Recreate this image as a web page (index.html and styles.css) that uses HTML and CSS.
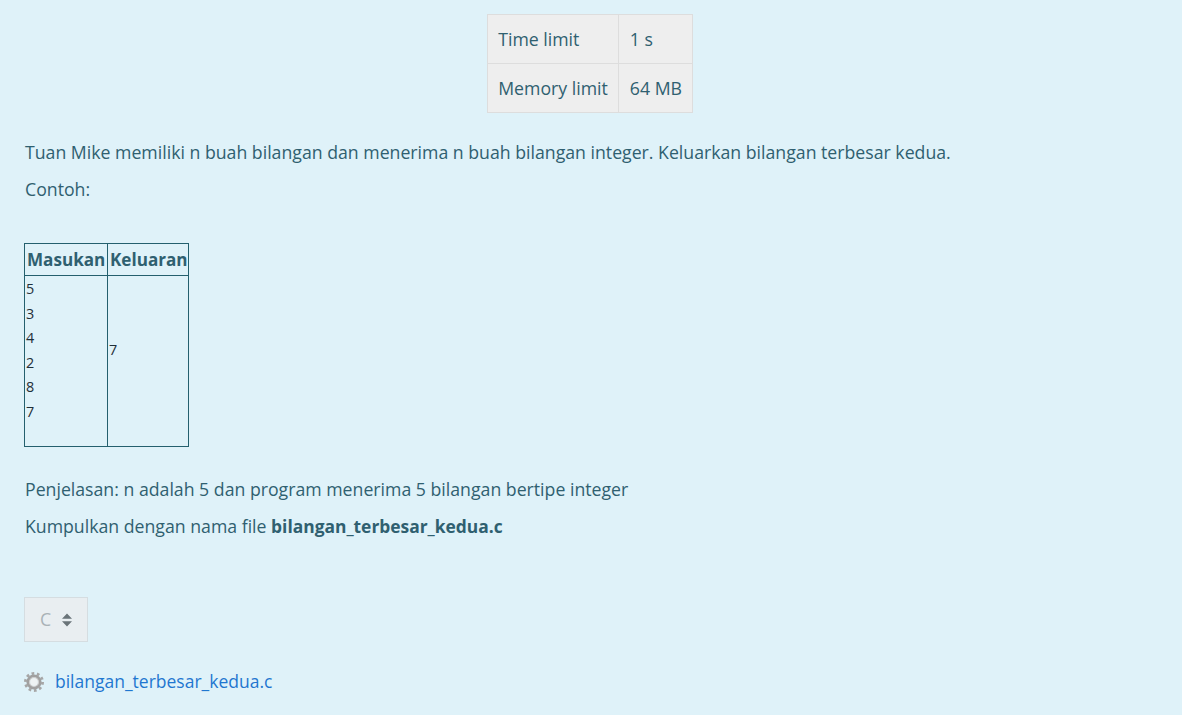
FILE: index.html
```html
<!DOCTYPE html>
<html lang="en">
  <head>
    <meta charset="UTF-8" />
    <title>bilangan_terbesar_kedua</title>
    <link rel="stylesheet" href="styles.css">
  </head>
  <body>
    <table class="limits">
      <tr>
        <td class="limit-name">Time limit</td>
        <td class="limit-value">1 s</td>
      </tr>
      <tr>
        <td class="limit-name">Memory limit</td>
        <td class="limit-value">64 MB</td>
      </tr>
    </table>

    <div class="statement">
      <p>Tuan Mike memiliki n buah bilangan dan menerima n buah bilangan integer. Keluarkan bilangan terbesar kedua.</p>
      <p>Contoh:</p>

      <table class="sample">
        <tr>
          <th class="col-in">Masukan</th>
          <th class="col-out">Keluaran</th>
        </tr>
        <tr>
          <td>
            <div>5</div>
            <div>3</div>
            <div>4</div>
            <div>2</div>
            <div>8</div>
            <div>7</div>
            <div class="blank">&nbsp;</div>
          </td>
          <td class="answer">
            <div>7</div>
            <div>&nbsp;</div>
          </td>
        </tr>
      </table>

      <p>Penjelasan: n adalah 5 dan program menerima 5 bilangan bertipe integer</p>
      <p>Kumpulkan dengan nama file <strong>bilangan_terbesar_kedua.c</strong></p>
    </div>

    <div class="lang-select">
      <span class="lang-label">C</span>
      <svg class="sort-icon" width="10" height="14" viewBox="0 0 10 14">
        <path d="M5 0.5 L10 5.8 H0 Z M5 13.5 L0 8.2 H10 Z" fill="#6a7479" />
      </svg>
    </div>

    <div class="attachment">
      <svg class="gear" width="20" height="20" viewBox="0 0 20 20">
        <circle cx="10" cy="10" r="8.6" fill="none" stroke="#a6a6a6" stroke-width="2.8" stroke-dasharray="2.7 2.7" />
        <circle cx="10" cy="10" r="6" fill="none" stroke="#a0a0a0" stroke-width="3.2" />
        <circle cx="10" cy="10" r="4.4" fill="none" stroke="#cfcfcf" stroke-width="1.4" />
        <circle cx="10" cy="10" r="3.7" fill="#eef2f3" />
      </svg>
      <a href="#">bilangan_terbesar_kedua.c</a>
    </div>
  </body>
</html>
```

FILE: styles.css
```css
body {
  margin: 0;
  padding: 14px 27px 0 25px;
  height: 715px;
  box-sizing: border-box;
  overflow: hidden;
  background-color: #dff2f9;
  color: #2f6070;
  font-family: "Open Sans", sans-serif;
  font-size: 17.7px;
  line-height: 27px;
}
p {
  margin: 0 0 10px;
}
strong {
  font-size: 17.4px;
}
.limits {
  border-collapse: collapse;
  margin: 0 auto 26px;
  background-color: #eeeeee;
}
.limits td {
  border: 1px solid #dddddd;
  height: 48px;
  padding: 0 10px;
  white-space: nowrap;
}
.limits .limit-value {
  width: 53px;
  padding: 0 9px 0 11px;
}
.sample {
  border-collapse: collapse;
  margin: 40px 0 29px -1px;
}
.sample th,
.sample td {
  border: 1px solid #24606e;
  padding: 1px;
}
.sample th {
  height: 29px;
  padding-left: 2px;
  padding-right: 0;
  text-align: left;
  font-weight: 700;
  font-size: 17.1px;
}
.sample td {
  font-size: 14.4px;
  line-height: 24.6px;
  color: #1f2f38;
}
.sample .answer {
  padding-top: 5px;
}
.sample .blank {
  line-height: 20.6px;
}
.col-in {
  width: 80px;
}
.col-out {
  width: 77px;
}
.lang-select {
  display: flex;
  align-items: center;
  gap: 11px;
  width: 64px;
  height: 45px;
  box-sizing: border-box;
  margin: 57px 0 0 -1px;
  padding-left: 15px;
  background-color: #e9eef1;
  border: 1px solid #d5dde1;
}
.lang-label {
  color: #a9b2b7;
}
.attachment {
  display: flex;
  align-items: center;
  gap: 11px;
  margin-top: 26px;
  margin-left: -1px;
}
.attachment a {
  font-size: 17.5px;
  color: #1f77d0;
  text-decoration: none;
}
```
